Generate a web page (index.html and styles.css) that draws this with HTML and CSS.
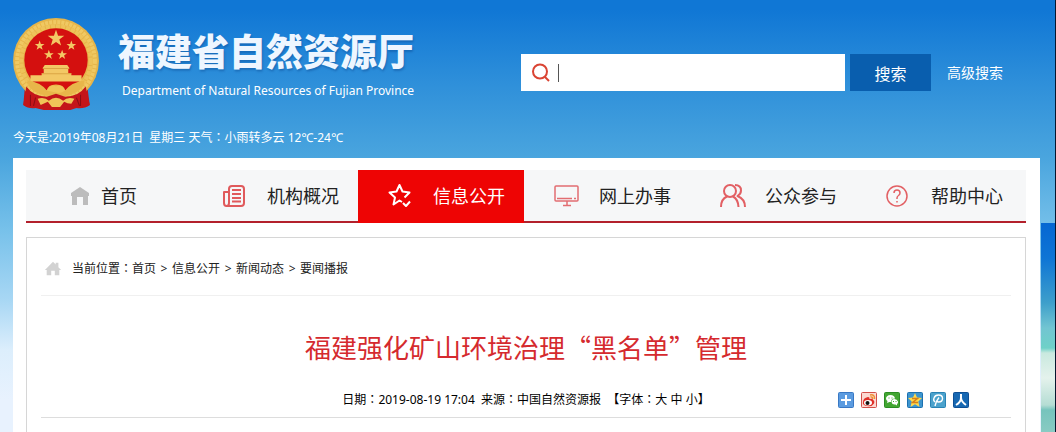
FILE: index.html
```html
<!DOCTYPE html>
<html lang="zh-CN">
<head>
  <meta charset="UTF-8">
  <meta name="viewport" content="width=device-width, initial-scale=1.0">
  <title>福建省自然资源厅</title>
  <link rel="stylesheet" href="styles.css">
</head>
<body>
  <!-- Header -->
  <header class="header">
    <div class="brand">
      <svg class="emblem" viewBox="0 0 84 90" aria-hidden="true">
        <defs>
          <path id="star" d="M0-10 2.4-3.2 9.5-3.1 3.8 1.2 5.9 8.1 0 4 -5.9 8.1 -3.8 1.2 -9.5-3.1 -2.4-3.2Z"/>
        </defs>
        <path fill="#c4151a" d="M12 62 10 85Q15 89 22 88L30 90H56L62 88Q70 89 75 85L72 62Z"/>
        <circle cx="42" cy="42" r="42" fill="#e6b54a"/>
        <circle cx="42" cy="42" r="38" fill="none" stroke="#f0c963" stroke-width="4" stroke-dasharray="3 1"/>
        <circle cx="42" cy="42" r="34" fill="none" stroke="#eec35a" stroke-width="4" stroke-dasharray="4 1"/>
        <circle cx="42" cy="41" r="31" fill="#d4100f"/>
        <g fill="#f3c865">
          <use href="#star" transform="translate(42 20) scale(.85)"/>
          <use href="#star" transform="translate(26 27) scale(.5)"/>
          <use href="#star" transform="translate(57 27) scale(.5)"/>
          <use href="#star" transform="translate(35 36) scale(.5)"/>
          <use href="#star" transform="translate(48 36) scale(.5)"/>
          <path d="M31 46H53L55 49H29ZM30 50H54V54H30ZM28 54H57V60H28ZM17 56H67V62H17Z"/>
        </g>
        <path stroke="#dba544" d="M29 49.500H55M28 54.500H57"/>
        <path fill="#e8b64a" d="M14 61Q27 63 33 71Q34 65 42 65T51 71Q57 63 70 61Q69 73 51 76H33Q15 73 14 61Z"/>
        <path fill="#c4151a" d="M13 67Q20 77 33 77L42 74 51 77Q64 77 71 67L75 85Q66 89 60 84L42 86 24 84Q17 89 10 85Z"/>
        <path fill="none" stroke="#8d0d14" d="M17 75V86M22 78 20 86M66 75V86M62 78 65 86"/>
        <path fill="#f0c458" d="M33 71Q37 64 42 67Q47 64 51 71Q47 74 42 73T33 71ZM24 79Q31 77 35 81Q42 75 49 81Q53 77 60 79L57 84Q53 84 50 82L46 87H38L34 82 27 85Z"/>
      </svg>
      <div class="brand-text">
        <h1>福建省自然资源厅</h1>
        <p>Department of Natural Resources of Fujian Province</p>
      </div>
    </div>
    <form class="search">
      <label class="search-box">
        <svg viewBox="0 0 20 20" aria-hidden="true"><circle cx="9" cy="8.500" r="7"/><path d="M14 14 18 18"/></svg>
        <input type="text" aria-label="搜索">
      </label>
      <button type="button">搜索</button>
      <a href="#">高级搜索</a>
    </form>
  </header>
  <p class="today">今天是:2019年08月21日&nbsp; 星期三 天气<span class="colon">：</span>小雨转多云 12℃-24℃</p>

  <div class="page">
    <!-- Navigation -->
    <nav class="nav">
      <a href="#" class="home">
        <svg viewBox="0 0 20 20" aria-hidden="true"><path fill="#bcbcbc" d="M10 1 19 7V10H18V19H13V11H7V19H2V10H1V7Z"/></svg>
        <span>首页</span>
      </a>
      <a href="#">
        <svg class="line" viewBox="0 0 26 26" aria-hidden="true"><path stroke="#e05a5c" d="M6 9H2V20Q2 23 4.500 23T7 20V6Q7 3 10 3H19Q22 3 22 6V20Q22 23 19 23H4.500"/><path stroke="#e05a5c" d="M10 7H19M10 11H19M10 15H19M10 18.500H19"/></svg>
        <span>机构概况</span>
      </a>
      <a href="#" class="active">
        <svg class="line" viewBox="0 0 26 26" aria-hidden="true"><path stroke="#fff" d="M14 19 11.500 17.500 5.500 21.500 7 14.500 1.500 9.500 8.500 8.500 11.500 2 14.500 8.500 21.500 9.500 16.500 14.500M15 20 18 23 22 18.500"/></svg>
        <span>信息公开</span>
      </a>
      <a href="#">
        <svg class="line thin" viewBox="0 0 26 26" aria-hidden="true"><path stroke="#e26d71" d="M2 3H23Q24 3 24 4V17Q24 18 23 18H2Q1 18 1 17V4Q1 3 2 3ZM3 15.500H18M20 15.500H22M13 18V22M9 22.500H17"/></svg>
        <span>网上办事</span>
      </a>
      <a href="#">
        <svg class="line" viewBox="0 0 26 26" aria-hidden="true"><circle cx="10" cy="8" r="6" stroke="#e26064"/><path stroke="#e26064" d="M1 24Q1 16 7 13.500M13 13.500Q18 16 18.500 24M15 2Q21 2 21 7.500Q21 11 17.500 13Q25 16 25 24"/></svg>
        <span>公众参与</span>
      </a>
      <a href="#">
        <svg class="line thin" viewBox="0 0 26 26" aria-hidden="true"><circle cx="11" cy="13" r="10" stroke="#e26064"/><path stroke="#e26064" d="M8 10Q8 7 11 7T14 10Q14 11.500 12.500 12.500T11 15V16M11 18V19.500"/></svg>
        <span>帮助中心</span>
      </a>
    </nav>

    <!-- Article -->
    <main class="article">
      <div class="crumbs">
        <svg viewBox="0 0 20 20" aria-hidden="true"><path d="M10 2 13 5V3H16V8L19 11H17V17H12V12H8V17H3V11H1Z"/></svg>
        <span>当前位置<span class="colon">：</span><a href="#">首页</a><span class="sep">&gt;</span><a href="#">信息公开</a><span class="sep">&gt;</span><a href="#">新闻动态</a><span class="sep">&gt;</span><a href="#">要闻播报</a></span>
      </div>
      <h2>福建强化矿山环境治理“黑名单”管理</h2>
      <div class="meta">
        <p>日期<span class="colon">：</span>2019-08-19 17:04&nbsp; 来源<span class="colon">：</span>中国自然资源报&nbsp; 【字体<span class="colon">：</span><a href="#">大</a> <a href="#">中</a> <a href="#">小</a>】</p>
        <div class="share">
          <a href="#" aria-label="更多">
            <svg viewBox="0 0 16 16"><rect x=".5" y=".5" width="15" height="15" rx="1" fill="#5b9be0" stroke="#3978c4"/><path stroke="#fff" stroke-width="2" d="M8 3V13M3 8H13"/></svg>
          </a>
          <a href="#" aria-label="新浪微博">
            <svg viewBox="0 0 16 16"><rect x=".5" y=".5" width="15" height="15" rx="1" fill="#fbd9d2" stroke="#d2504a"/><path fill="#df3028" d="M2 10Q2 6 7 5Q9 5 8.500 7Q12 6 12 8Q14 9 13 11.500Q11 15 6 14T2 10Z"/><ellipse cx="7" cy="10.700" rx="4" ry="2.700" fill="#fff"/><circle cx="6.500" cy="11" r="2" fill="#111"/><path fill="none" stroke="#ed9135" stroke-width="1.500" d="M9 3Q14 2 13.500 7M9.500 5Q12 4.500 11.500 7"/></svg>
          </a>
          <a href="#" aria-label="微信">
            <svg viewBox="0 0 16 16"><rect x=".5" y=".5" width="15" height="15" rx="1" fill="#42a632" stroke="#2b8d23"/><path fill="#fff" d="M6.500 3C3.500 3 2 5 2 6.500Q2 8 3.500 9L3 11 5.500 10H7Q7 6.500 11 6.500Q10.500 3 6.500 3ZM10.500 7C8.500 7 7.500 8.500 7.500 10Q8 13 11.500 12.500L13 13.500V12Q14.500 11 14 9.500Q13 7 10.500 7Z"/><path stroke="#42a632" d="M4.500 6H5.500M7.500 6H8.500M9 9.500H10M11.500 9.500H12.500"/></svg>
          </a>
          <a href="#" aria-label="QQ空间">
            <svg viewBox="0 0 16 16"><rect x=".5" y=".5" width="15" height="15" rx="1" fill="#3d95cf" stroke="#1c70ae"/><path fill="#ffd94a" d="M8 1 10 5.500 15 6 11.300 9.500 12.500 15 8 12.300 3.500 15 4.700 9.500 1 6 6 5.500Z"/><path fill="none" stroke="#d6801b" stroke-width="1.500" d="M5 6.500H10.500L5.500 10.500H11"/></svg>
          </a>
          <a href="#" aria-label="腾讯微博">
            <svg viewBox="0 0 16 16"><rect x=".5" y=".5" width="15" height="15" rx="1" fill="#4ba2cc" stroke="#2983b4"/><path fill="none" stroke="#fff" stroke-width="1.400" d="M5 10Q3 8.500 4 6Q5 3 8.500 3Q12.500 3 12.500 6.500T8.500 10Q7 10 7 8.500M9 5.500Q6 9 5 14"/></svg>
          </a>
          <a href="#" aria-label="人人网">
            <svg viewBox="0 0 16 16"><rect x=".5" y=".5" width="15" height="15" rx="1" fill="#1768b2" stroke="#0e4f94"/><path fill="none" stroke="#fff" stroke-width="2" d="M8 2V6Q8 10 3 13M8 6Q8.500 10 13 13"/></svg>
          </a>
        </div>
      </div>
    </main>
  </div>
</body>
</html>
```
FILE: styles.css
```css
* {
  box-sizing: border-box;
}

body {
  display: flex;
  flex-direction: column;
  min-height: 100vh;
  margin: 0;
  padding: 0 15px 0 13px;
  border-right: 1px solid #06162e;
  font-family: "Noto Sans", "Noto Sans CJK SC", sans-serif;
  font-size: 12px;
  line-height: 18px;
  color: #222;
  background:
    linear-gradient(#0567d2 0, #0e75d5 35px, #3e9fcb 80px, #72c5d2 105px, #6ed1c8 125px, #c9e9df 130px, #e4f2ec 155px, #b5ddd4 182px, #76c4bd 187px, #8acbc3 210px) right 223px / 15px 100% no-repeat,
    linear-gradient(#1077d5 0, #1077d5 10px, #2f90da 85px, #4aa5de 158px, #77c1ea 230px, #a8d7f4 300px, #dceefc 350px, #e8f2fe 400px);
}

h1, h2, p {
  margin: 0;
}

a {
  color: inherit;
  text-decoration: none;
}

/* Centred full-width colon */
.colon {
  font-family: "Noto Sans CJK TC", sans-serif;
  font-feature-settings: "locl" 0;
  line-height: 1;
}

/* Header */
.header {
  display: flex;
  justify-content: space-between;
  align-items: flex-start;
  padding-top: 18px;
  color: #fff;
}

.brand {
  display: flex;
  gap: 19px;
}

.emblem {
  width: 86px;
  height: 92px;
}

.brand-text {
  padding-top: 8px;
}

.brand h1 {
  font-family: "Noto Sans CJK SC", sans-serif;
  font-size: 37px;
  font-weight: 900;
  line-height: 48px;
  color: #eef6ff;
  text-shadow: 1px 2px 2px rgba(0, 50, 120, 0.3);
}

.brand p {
  padding: 8px 0 0 4px;
  font-size: 12px;
}

.search {
  display: flex;
  align-items: center;
  padding: 36px 37px 0 0;
}

.search-box {
  display: flex;
  align-items: center;
  gap: 7px;
  width: 324px;
  height: 37px;
  padding-left: 10px;
  background: #fff;
}

.search-box svg {
  width: 20px;
  height: 20px;
  fill: none;
  stroke: #da4433;
  stroke-width: 2;
}

.search-box input {
  flex: 1;
  min-width: 0;
  height: 18px;
  padding: 0 4px;
  border: 0;
  border-left: 1px solid #555;
  outline: none;
}

.search button {
  width: 81px;
  height: 37px;
  margin: 0 16px 0 5px;
  border: 0;
  background: #095eae;
  color: #fff;
  font-family: inherit;
  font-size: 16px;
  cursor: pointer;
}

.search a {
  font-size: 14px;
}

.today {
  padding: 19px 0 11px;
  color: #fff;
}

.page {
  display: flex;
  flex-direction: column;
  flex: 1;
  padding: 12px 14px 0 13px;
  background: #fff;
}

/* Navigation */
.nav {
  display: grid;
  grid-template-columns: repeat(6, 16.6%);
  height: 53px;
  background: #f6f7f8;
  border-bottom: 2px solid #b3202c;
}

.nav a {
  display: flex;
  align-items: center;
  gap: 19px;
  height: 51px;
  padding-left: 30px;
  font-size: 18px;
  white-space: nowrap;
}

.nav svg {
  width: 26px;
  height: 26px;
}

.nav .home {
  gap: 11px;
  padding-left: 44px;
}

.nav .home svg {
  width: 20px;
  height: 20px;
}

.nav .active {
  height: 53px;
  padding-bottom: 2px;
  background: #ee0404;
  color: #fff;
}

.line {
  fill: none;
  stroke-width: 2;
  stroke-linejoin: round;
}

.line.thin {
  stroke-width: 1.5;
}

/* Article */
.article {
  flex: 1;
  margin-top: 14px;
  padding: 0 14px;
  border: 1px solid #d6d6d6;
  border-bottom: 0;
}

.crumbs {
  display: flex;
  align-items: center;
  gap: 10px;
  padding: 22px 0 17px 3px;
  border-bottom: 1px solid #f0f0f0;
}

.crumbs svg {
  width: 18px;
  height: 18px;
  fill: #d2d2d2;
}

.sep {
  display: inline-block;
  width: 16px;
  text-align: center;
}

.article h2 {
  padding: 31px 0 24px;
  font-family: "Noto Sans CJK SC", sans-serif;
  font-size: 26px;
  font-weight: 400;
  line-height: 40px;
  text-align: center;
  color: #d52a2e;
}

.meta {
  display: grid;
  grid-template-columns: 1fr auto 1fr;
  align-items: center;
  padding-bottom: 8px;
  border-bottom: 1px solid #ddd;
  color: #000;
}

.meta p {
  grid-column: 2;
}

.share {
  display: flex;
  justify-content: flex-end;
  gap: 7px;
  padding-right: 42px;
}

.share a {
  display: flex;
}

.share svg {
  width: 16px;
  height: 16px;
}
```
